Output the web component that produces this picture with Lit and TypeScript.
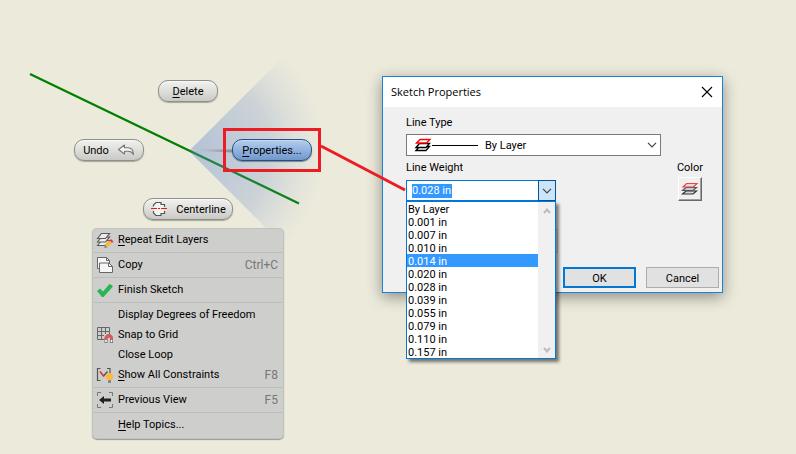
import { LitElement, html, css, svg, nothing, TemplateResult } from "lit";
import { customElement } from "lit/decorators.js";
import { classMap } from "lit/directives/class-map.js";

const icon = (w: number, h: number, body: unknown) =>
  html`<svg width=${w} height=${h} viewBox="0 0 ${w} ${h}" aria-hidden="true">${body}</svg>`;

const icons: Record<string, TemplateResult> = {
  undo: icon(18, 12, svg`<path d="M1.500 5.500 7.500 1v2.800h3.500c3.200 0 5.300 1.900 5.500 6.700-1.400-2.400-3-3.200-5.500-3.200H7.500V10z" fill="#f4f4f2" stroke="#777" stroke-width="1.100" stroke-linejoin="round"/>`),
  centerline: icon(18, 16, svg`
    <path d="M3.500 5.500V4L6 1.500h5v2h3.500v2.500M3.500 10v2L6 14.500h5v-2h3.500V10" fill="#f4f4f2" stroke="#555" stroke-width="1.200"/>
    <path d="M4.200 5.500h9.600v5H4.200z" fill="#f2f2f0"/>
    <path d="M1 7.500h6M8 7.500h2M11 7.500h6" stroke="#e81818" stroke-width="1"/>`),
  repeat: icon(18, 18, svg`
    <g fill="#ececec" stroke="#5a5a5a" stroke-width="1.200"><path d="M1.500 14.500 5.500 9.500h8L9.500 14.500z"/><path d="M1.500 11 5.500 6h8L9.500 11z"/><path d="M1.500 7.500 5.500 2.500h8L9.500 7.500z"/></g>
    <path d="m8.500 13.500 4.500-4 2.500 2.500-4.200 4.200z" fill="#f5b83d"/><path d="m13.500 9.500 1.500-1.500 2.500 2.500L16 12z" fill="#f03a3a"/><path d="M8.500 13.500V17l3-.5z" fill="#888"/>`),
  copy: icon(18, 18, svg`<g fill="#f6f6f6" stroke="#666"><path d="M1.500 12.500v-11h9l3 3v8z"/><path d="M10.500 1.500v3h3" fill="none"/><path d="M3.500 16.500v-9.500h9.500l3.500 3.500v6z"/><path d="M12.500 7v3.500h4" fill="none"/></g>`),
  finish: icon(18, 18, svg`<path d="M1 10 4 7.500l3 3L13.500 3l3 1.500V6L7.500 16H6z" fill="#28b554"/>`),
  snap: icon(18, 18, svg`
    <path d="M1.500 1.500h12v12h-12zM5.500 1.500v12M9.500 1.500v12M1.500 5.500h12M1.500 9.500h12" fill="none" stroke="#666"/>
    <path d="M8 17V8h9.500v9z" fill="#cececc"/><path d="M10 17V12.500a2.700 2.700 0 0 1 5.500 0V17" fill="none" stroke="#666" stroke-width="3"/><path d="M10 16.200v-3.700a2.700 2.700 0 0 1 5.500 0v3.700" fill="none" stroke="#fff" stroke-width="1.600"/><path d="M10 14v-1.500a2.700 2.700 0 0 1 5.500 0V14" fill="none" stroke="#d9595c" stroke-width="2.800"/>`),
  constraints: icon(18, 18, svg`
    <path d="M4.500 2.500h-3v12h3M11 2.500h3v5" fill="none" stroke="#555" stroke-width="1.200"/>
    <path d="m4 5.500 4 5" stroke="#e03030" stroke-width="1.600"/><path d="m7.500 10 4-4.500" stroke="#555" stroke-width="1.400"/>
    <circle cx="13.500" cy="10.500" r="3.600" fill="#fbb93d"/><path d="M12 14h3v3h-3z" fill="#888"/>`),
  previous: icon(18, 18, svg`
    <path d="M5 1.500H1.500V5M13 1.500h3.500V5M5 16.500H1.500V13M13 16.500h3.500V13" fill="none" stroke="#777"/>
    <path d="M3 9l5-4v2.500h7v3H8V13z" fill="#222"/>`),
  layers: icon(18, 14, svg`
    <g fill="#fff" stroke-width="1.300"><path d="M2 12.500 5.500 8.500h10L12 12.500z" stroke="#000"/>
    <path d="M2 9.500 5.500 5.500h10L12 9.500z" stroke="#000"/>
    <path d="M2.500 5 6 1.500h10L12.500 5z" stroke="#f00"/></g>`),
  colorLayers: icon(18, 14, svg`
    <path d="M1.500 12 5 9h10.500L12 12z" fill="#cfd6df" stroke="#333" stroke-width="1.200"/>
    <path d="M1.500 8.500 5 5.500h10.500L12 8.500z" fill="#c4ccd6" stroke="#555" stroke-width="1.200"/>
    <path d="M2 5 5.500 1.500h10.500L12.500 5z" fill="#d5dce4" stroke="#f04040" stroke-width="1.200"/>`),
  close: icon(12, 12, svg`<path d="m1 1 10 10M11 1 1 11" stroke="#000" stroke-width="1.100"/>`),
  down: icon(10, 6, svg`<path d="m1 .8 4 4 4-4" fill="none" stroke="#444" stroke-width="1.200"/>`),
  scrollUp: icon(8, 6, svg`<path d="m1 5 3-3.500L7 5" fill="none" stroke="#bcbcbc" stroke-width="2"/>`),
  scrollDown: icon(8, 6, svg`<path d="m1 1 3 3.500L7 1" fill="none" stroke="#bcbcbc" stroke-width="2"/>`),
};

const mnemonic = (text: string, on = true) => (on ? html`<u>${text[0]}</u>${text.slice(1)}` : text);

const reset = css`
  * { box-sizing: border-box; }
  button, input, select { font: inherit; color: inherit; margin: 0; padding: 0; border: 0; background: none; border-radius: 0; }
  svg { display: block; flex: none; }
  u { text-decoration: underline; text-underline-offset: 2px; }
`;

interface Item { label: string; icon?: string; key?: string; mnemonic?: boolean }

@customElement("context-menu")
class ContextMenu extends LitElement {
  static styles = [reset, css`
    :host { display: block; }
    .menu { padding: 2px 2px 4px; border-radius: 5px; background: #cececc; box-shadow: inset 0 0 0 1px #c2c2bd, 0 1px 1px #9a9a92; }
    .group + .group { border-top: 1px solid #bcbcba; margin-top: 2px; padding-top: 2px; }
    .item { display: flex; align-items: center; width: 100%; height: 20px; padding: 0 4px 0 2px; text-align: left; }
    .slot { width: 22px; height: 18px; }
    .label { flex: 1; white-space: nowrap; }
    .key { color: #777; font-size: 12px; }
  `];

  groups: Item[][] = [
    [{ label: "Repeat Edit Layers", icon: "repeat", mnemonic: true }],
    [{ label: "Copy", icon: "copy", key: "Ctrl+C" }],
    [{ label: "Finish Sketch", icon: "finish" }],
    [
      { label: "Display Degrees of Freedom" },
      { label: "Snap to Grid", icon: "snap" },
      { label: "Close Loop" },
      { label: "Show All Constraints", icon: "constraints", key: "F8", mnemonic: true },
    ],
    [{ label: "Previous View", icon: "previous", key: "F5" }],
    [{ label: "Help Topics...", mnemonic: true }],
  ];

  render() {
    return html`<div class="menu" role="menu">
      ${this.groups.map((g) => html`<div class="group" role="group">
        ${g.map((i) => html`<button class="item" role="menuitem">
          <span class="slot">${i.icon ? icons[i.icon] : nothing}</span>
          <span class="label">${mnemonic(i.label, !!i.mnemonic)}</span>
          ${i.key ? html`<span class="key">${i.key}</span>` : nothing}
        </button>`)}
      </div>`)}
    </div>`;
  }
}

@customElement("marking-button")
class MarkingButton extends LitElement {
  static properties = { label: {}, glyph: {}, active: { type: Boolean }, underline: { type: Boolean }, trailing: { type: Boolean } };
  declare label: string;
  declare glyph: string;
  declare active: boolean;
  declare underline: boolean;
  declare trailing: boolean;
  static styles = [reset, css`
    :host { display: block; }
    .pill { display: flex; align-items: center; justify-content: center; gap: 8px; width: 100%; height: 22px; border: 1px solid #8f8f8b; border-radius: 10px; background: linear-gradient(#f1f1ef, #dededb 50%, #c9c9c5); box-shadow: 0 1px 1px #a8a79c, inset 0 1px #f8f8f6; white-space: nowrap; }
    .text { padding-top: 2px; }
    .active { border-color: #264f84; background: linear-gradient(#b4cdec, #91b3df 50%, #7197ca); box-shadow: 0 1px 1px #7a8494, inset 0 1px #c5d9f2; }
    .trailing { flex-direction: row-reverse; }
  `];
  render() {
    return html`<button class=${classMap({ pill: true, active: this.active, trailing: this.trailing })}>
      ${this.glyph ? icons[this.glyph] : nothing}<span class="text">${mnemonic(this.label, !!this.underline)}</span>
    </button>`;
  }
}

@customElement("sketch-properties")
class SketchProperties extends LitElement {
  static properties = { weight: { state: true } };
  declare weight: string;
  constructor() { super(); this.weight = "0.014 in"; }

  static styles = [reset, css`
    :host { display: block; }
    .window { border: 1px solid #1883d7; background: #f0f0f0; box-shadow: 0 4px 14px rgba(0, 0, 0, 0.4); }
    .title { display: flex; align-items: center; justify-content: space-between; height: 30px; padding: 0 9px 0 8px; background: #fff; }
    .name { margin: 0; padding-bottom: 2px; font: 400 11px "Open Sans", "Noto Sans", sans-serif; }
    .form { padding: 9px 20px 0 23px; }
    .label { display: block; height: 14px; line-height: 14px; }
    .type { display: flex; align-items: center; position: relative; width: 255px; height: 22px; margin: 4px 0 5px; border: 1px solid #7a7a7a; background: #fff; }
    .preview { position: absolute; left: 7px; display: flex; align-items: center; pointer-events: none; }
    .sample { width: 46px; height: 1px; background: #000; }
    .typeselect { width: 100%; height: 20px; padding: 2px 0 0 78px; appearance: none; outline: 0; }
    .arrow { position: absolute; right: 3px; pointer-events: none; }
    .row { display: flex; justify-content: space-between; }
    .weight { position: relative; width: 150px; }
    .combo { display: flex; height: 21px; margin-top: 5px; border: 1px solid #0078d7; background: #fff; }
    .edit { flex: 1; display: flex; align-items: center; padding-left: 5px; }
    .value { width: 40px; height: 14px; background: #39f; color: #fff; outline: 0; }
    .drop { display: grid; place-items: center; width: 18px; margin: -1px; border: 1px solid #005499; background: #cce4f7; height: 21px; }
    .popup { position: absolute; top: 40px; left: 0; right: 0; z-index: 1; display: flex; border: 1px solid #0078d7; background: #fff; box-shadow: 3px 3px 3px rgba(0, 0, 0, 0.5); }
    .list { flex: 1; margin: 0; padding: 0; list-style: none; }
    .option { height: 13px; line-height: 13px; padding: 1px 0 0 1px; }
    .selected { background: #39f; color: #fff; }
    .scroll { display: flex; flex-direction: column; justify-content: space-between; align-items: center; width: 17px; padding: 6px 0 5px; background: #f0f0f0; }
    .color { display: flex; flex-direction: column; align-items: center; gap: 2px; margin-right: -1px; }
    .swatch { display: grid; place-items: center; width: 24px; height: 24px; border: 1px solid; border-color: #fff #696969 #696969 #fff; box-shadow: inset -1px -1px #a0a0a0; background: #f0f0f0; }
    .extra { display: block; width: 152px; height: 24px; margin-top: 28px; border: 1px solid #bfbfbf; }
    .actions { display: flex; justify-content: flex-end; gap: 10px; padding: 14px 3px 4px; }
    .action { width: 73px; height: 21px; padding-top: 2px; border: 1px solid #adadad; background: #e1e1e1; }
    .default { border: 2px solid #0078d7; }
  `];

  weights = ["By Layer", "0.001 in", "0.007 in", "0.010 in", "0.014 in", "0.020 in", "0.028 in", "0.039 in", "0.055 in", "0.079 in", "0.110 in", "0.157 in"];

  render() {
    return html`<section class="window" role="dialog" aria-labelledby="name">
      <header class="title">
        <h1 class="name" id="name">Sketch Properties</h1>
        <button aria-label="Close">${icons.close}</button>
      </header>
      <div class="form">
        <label class="label" for="type">Line Type</label>
        <div class="type">
          <span class="preview">${icons.layers}<span class="sample"></span></span>
          <select class="typeselect" id="type"><option>By Layer</option></select>
          <span class="arrow">${icons.down}</span>
        </div>
        <div class="row">
          <div class="weight">
            <label class="label" for="weight">Line Weight</label>
            <div class="combo">
              <span class="edit"><input class="value" id="weight" role="combobox" aria-expanded="true" aria-controls="weights" .value=${"0.028 in"}></span>
              <button class="drop" aria-label="Show line weights">${icons.down}</button>
            </div>
            <div class="popup">
              <ul class="list" id="weights" role="listbox">
                ${this.weights.map((w) => html`<li role="option" aria-selected=${w === this.weight ? "true" : "false"}
                  class=${classMap({ option: true, selected: w === this.weight })}
                  @click=${() => (this.weight = w)}>${w}</li>`)}
              </ul>
              <div class="scroll">${icons.scrollUp}${icons.scrollDown}</div>
            </div>
          </div>
          <div class="color">
            <label class="label" for="color">Color</label>
            <button class="swatch" id="color">${icons.colorLayers}</button>
          </div>
        </div>
        <select class="extra" disabled aria-label="Scale"></select>
      </div>
      <footer class="actions">
        <button class="action default">OK</button>
        <button class="action">Cancel</button>
      </footer>
    </section>`;
  }
}

@customElement("app-root")
class AppRoot extends LitElement {
  static styles = [reset, css`
    :host { display: block; font: 11px/14px Roboto, "Liberation Sans", sans-serif; color: #000; }
    .canvas { position: relative; min-height: 100vh; overflow: hidden; background: #eceadb; }
    .drawing { position: absolute; inset: 0; width: 100%; height: 100%; pointer-events: none; }
    .node { position: absolute; }
    .delete { left: 158px; top: 80px; width: 60px; }
    .undo { left: 74px; top: 139px; width: 70px; }
    .properties { left: 232px; top: 139px; width: 80px; }
    .centerline { left: 143px; top: 198px; width: 90px; }
    .menu { left: 92px; top: 228px; width: 192px; }
    .dialog { left: 382px; top: 76px; width: 341px; }
  `];

  render() {
    return html`<main class="canvas">
      <svg class="drawing" aria-hidden="true">
        <defs>
          <radialGradient id="beam" gradientUnits="userSpaceOnUse" cx="189" cy="151" r="136">
            <stop offset="0" stop-color="#8aa6d4" stop-opacity=".6"/>
            <stop offset=".6" stop-color="#94aace" stop-opacity=".36"/>
            <stop offset="1" stop-color="#b0c0d8" stop-opacity="0"/>
          </radialGradient>
          <linearGradient id="hand"><stop offset="0" stop-color="#c8ccd4" stop-opacity=".4"/><stop offset="1" stop-color="#858a94"/></linearGradient>
          <linearGradient id="line" gradientUnits="userSpaceOnUse" x1="30" y1="0" x2="299" y2="0">
            <stop offset=".59" stop-color="#008000"/><stop offset=".61" stop-color="#268450"/><stop offset="1" stop-color="#088210"/>
          </linearGradient>
        </defs>
        <path d="M189 151 285 55A136 136 0 0 1 285 247z" fill="url(#beam)"/>
        <path d="M30 74 299 203.500" stroke="url(#line)" stroke-width="2.300"/>
        <path d="M192 149 233 149.500v3L192 151z" fill="url(#hand)"/>
      </svg>
      <marking-button class="node delete" label="Delete" underline></marking-button>
      <marking-button class="node undo" label="Undo" glyph="undo" trailing></marking-button>
      <marking-button class="node properties" label="Properties..." active underline></marking-button>
      <marking-button class="node centerline" label="Centerline" glyph="centerline"></marking-button>
      <context-menu class="node menu"></context-menu>
      <sketch-properties class="node dialog"></sketch-properties>
      <svg class="drawing" aria-hidden="true">
        <path d="M224.500 129.500h95v41h-95z" fill="none" stroke="#ed1c24" stroke-width="3"/>
        <path d="M321 146 405 190" stroke="#ed1c24" stroke-width="3"/>
      </svg>
    </main>`;
  }
}
